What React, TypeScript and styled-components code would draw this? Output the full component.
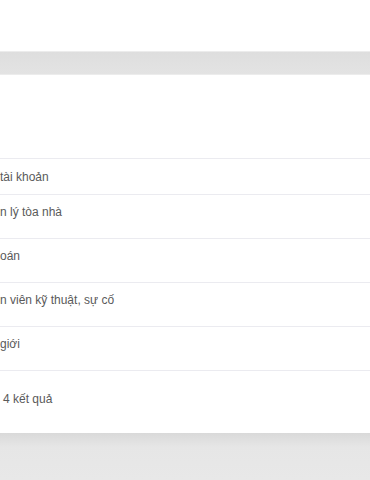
import React from 'react';
import styled, { createGlobalStyle } from 'styled-components';

const GlobalStyle = createGlobalStyle`
  html, body {
    margin: 0;
    padding: 0;
    background: #ffffff;
  }
  body {
    font-family: 'Liberation Sans', Arial, sans-serif;
  }
`;

const Page = styled.div`
  display: flex;
  flex-direction: column;
  width: 370px;
  height: 480px;
  overflow: hidden;
  background: #ffffff;
`;

const TopSpace = styled.div`
  height: 51px;
  flex: 0 0 auto;
`;

const Toolbar = styled.div`
  height: 22px;
  flex: 0 0 auto;
  border-top: 1px solid #ececec;
  border-bottom: 1px solid #ececec;
  background: linear-gradient(#dedede, #e3e3e3);
`;

const Card = styled.section`
  flex: 0 0 auto;
  background: #ffffff;
`;

const CardHead = styled.div`
  height: 83px;
`;

const Row = styled.div<{ $tall?: boolean }>`
  display: flex;
  align-items: flex-start;
  box-sizing: border-box;
  height: ${(p) => (p.$tall ? '44px' : '36px')};
  padding-top: ${(p) => (p.$tall ? '10px' : '11px')};
  border-top: 1px solid #ebebf0;
  font-size: 12px;
  line-height: 14px;
  color: #5a5a5a;
  white-space: nowrap;
`;

const Label = styled.span`
  display: block;
`;

const Footer = styled.div`
  height: 63px;
  border-top: 1px solid #ebebf0;
  padding: 21px 0 0 3px;
  box-sizing: border-box;
  font-size: 12px;
  line-height: 14px;
  color: #5a5a5a;
`;

const Backdrop = styled.div`
  flex: 1 1 auto;
  background: linear-gradient(#d9d9d9, #e6e6e6 14px, #e8e8e8);
`;

const rows = [
  { label: 'tài khoản', tall: false },
  { label: 'n lý tòa nhà', tall: true },
  { label: 'oán', tall: true },
  { label: 'n viên kỹ thuật, sự cố', tall: true },
  { label: 'giới', tall: true },
];

export default function App() {
  return (
    <>
      <GlobalStyle />
      <Page>
        <TopSpace />
        <Toolbar />
        <Card>
          <CardHead />
          {rows.map((r) => (
            <Row key={r.label} $tall={r.tall}>
              <Label>{r.label}</Label>
            </Row>
          ))}
          <Footer>4 kết quả</Footer>
        </Card>
        <Backdrop />
      </Page>
    </>
  );
}
